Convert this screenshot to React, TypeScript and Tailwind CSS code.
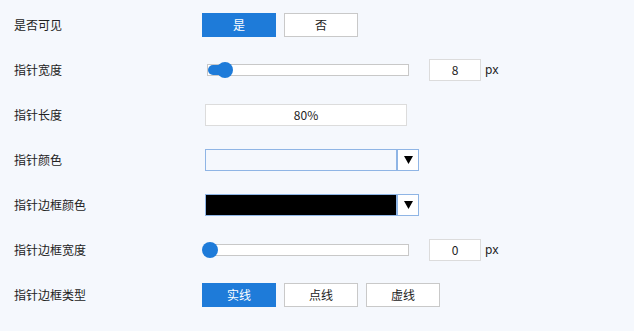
import React from "react";

const font = { fontFamily: '"Noto Sans CJK SC", "Noto Sans", sans-serif' };

function Row({ label, children }: { label: string; children: React.ReactNode }) {
  return (
    <div className="flex h-[45px] items-center">
      <div className="w-[202px] shrink-0 pl-[14px] text-[12px] text-[#222]">{label}</div>
      <div className="flex items-center">{children}</div>
    </div>
  );
}

function Btn({ text, active }: { text: string; active?: boolean }) {
  return (
    <div
      className={
        "flex h-[24px] w-[74px] items-center justify-center text-[12px] " +
        (active ? "bg-[#1e7bd9] text-white" : "border border-[#c9c9c9] bg-white text-[#222]")
      }
    >
      {text}
    </div>
  );
}

function Slider({ value }: { value: number }) {
  const x = -6 + value * 1.875;
  return (
    <div className="ml-[5px] flex items-center">
      <div className="relative h-[12px] w-[202px] border border-[#c8c8c8] bg-white">
        {value > 0 && (
          <div
            className="absolute left-0 top-0 h-[10px] rounded-l-full bg-[#1e7bd9]"
            style={{ width: x + 8 }}
          />
        )}
        <div
          className="absolute top-[-3px] h-[16px] w-[16px] rounded-full bg-[#1e7bd9]"
          style={{ left: x }}
        />
      </div>
      <div className="ml-[20px] flex h-[22px] w-[52px] items-center justify-center border border-[#dcdcdc] bg-white text-[12px] text-[#222]">
        {value}
      </div>
      <span className="ml-[4px] text-[12px] text-[#222]" style={{ fontFamily: '"Noto Sans", sans-serif' }}>px</span>
    </div>
  );
}

function ColorSelect({ color }: { color?: string }) {
  return (
    <div className="ml-[3px] flex h-[22px] w-[214px] border border-[#8fb5e5]">
      <div className={"flex-1 border-r-2 border-[#8fb5e5] " + (color ? "bg-black" : "bg-[#f5f8fd]")} />
      <div className="flex w-[20px] items-center justify-center bg-white">
        <svg width="9" height="8" viewBox="0 0 9 8">
          <polygon points="0,0 9,0 4.5,8" fill="#000" />
        </svg>
      </div>
    </div>
  );
}

export default function App() {
  return (
    <div className="h-[331px] w-[634px] bg-[#f5f8fd] pt-[2px]" style={font}>
      <Row label="是否可见">
        <div className="flex gap-[8px]">
          <Btn text="是" active />
          <Btn text="否" />
        </div>
      </Row>
      <Row label="指针宽度">
        <Slider value={8} />
      </Row>
      <Row label="指针长度">
        <div className="ml-[3px] flex h-[22px] w-[202px] items-center justify-center border border-[#dcdcdc] bg-white text-[12px] text-[#222]">
          80%
        </div>
      </Row>
      <Row label="指针颜色">
        <ColorSelect />
      </Row>
      <Row label="指针边框颜色">
        <ColorSelect color="black" />
      </Row>
      <Row label="指针边框宽度">
        <Slider value={0} />
      </Row>
      <Row label="指针边框类型">
        <div className="flex gap-[8px]">
          <Btn text="实线" active />
          <Btn text="点线" />
          <Btn text="虚线" />
        </div>
      </Row>
    </div>
  );
}
